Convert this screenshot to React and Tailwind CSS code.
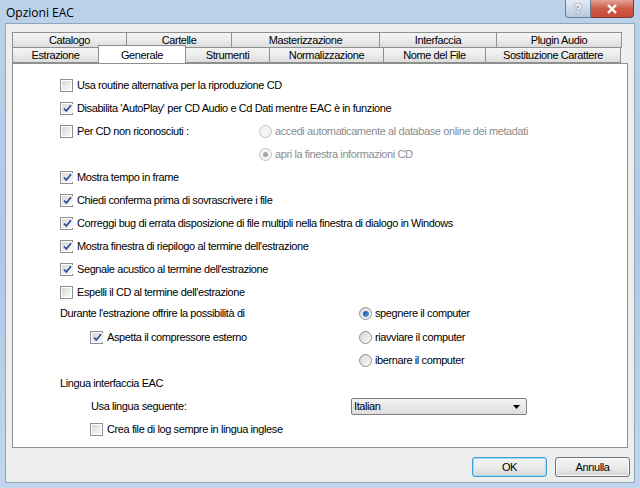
import React from 'react';

const font = { fontFamily: '"Liberation Sans", Arial, sans-serif' };

function CheckBox({ checked }) {
  return (
    <span className="w-[13px] h-[13px] shrink-0 border border-[#8e8f8f] bg-white p-px flex">
      <span className="flex-1 bg-gradient-to-br from-[#d8d8d8] to-[#fbfbfb] flex items-center justify-center">
        {checked && (
          <svg width="11" height="11" viewBox="0 0 11 11">
            <path d="M2 5.5 L4.3 8 L9 2.3" fill="none" stroke="#2b4a94" strokeWidth="1.7" />
          </svg>
        )}
      </span>
    </span>
  );
}

function Radio({ checked, disabled }) {
  return (
    <span
      className={`w-[13px] h-[13px] shrink-0 rounded-full border flex items-center justify-center ${
        disabled ? 'border-[#c2c2c2] bg-[#f4f4f4]' : 'border-[#8e8f8f] bg-gradient-to-br from-[#d6d6d6] to-[#fcfcfc]'
      }`}
    >
      {checked && (
        <span
          className={`rounded-full ${
            disabled ? 'bg-[#a6a6a6] w-[5px] h-[5px]' : 'bg-gradient-to-br from-[#124a8f] to-[#5aa7e6] w-[6px] h-[6px]'
          }`}
        />
      )}
    </span>
  );
}

function Check({ checked, label }) {
  return (
    <div className="flex items-center gap-[4px]">
      <CheckBox checked={checked} />
      <span>{label}</span>
    </div>
  );
}

function RadioItem({ checked, disabled, label }) {
  return (
    <div className={`flex items-center gap-[3px] ${disabled ? 'text-[#8d8d8d]' : ''}`}>
      <Radio checked={checked} disabled={disabled} />
      <span>{label}</span>
    </div>
  );
}

const row1 = [
  ['Catalogo', 115],
  ['Cartelle', 106],
  ['Masterizzazione', 149],
  ['Interfaccia', 118],
  ['Plugin Audio', 126],
];

const row2 = [
  ['Estrazione', 87],
  ['Generale', 88],
  ['Strumenti', 85],
  ['Normalizzazione', 115],
  ['Nome del File', 103],
  ['Sostituzione Carattere', 136],
];

function Tab({ label, width, active }) {
  if (active) {
    return (
      <div
        style={{ width }}
        className="h-[18px] -mt-[2px] -mb-px -ml-px relative z-10 bg-white border border-b-0 border-[#8e8f8f] flex items-start justify-center pt-[1px]"
      >
        {label}
      </div>
    );
  }
  return (
    <div
      style={{ width }}
      className="h-[16px] border border-[#8e8f8f] -ml-px first:ml-0 bg-gradient-to-b from-[#f4f4f4] via-[#ececec] to-[#dcdcdc] flex items-center justify-center"
    >
      {label}
    </div>
  );
}

export default function App() {
  return (
    <div
      style={font}
      className="w-[640px] h-[488px] overflow-hidden text-[11px] tracking-[-0.4px] text-black bg-gradient-to-b from-[#bcd2ea] via-[#aec8e6] to-[#c3d6ec] flex flex-col"
    >
      {/* Title bar */}
      <div className="h-[23px] flex items-start justify-between pl-[6px] pr-[6px] tracking-normal">
        <span className="text-[12px] mt-[4px]" style={{ fontFamily: '"Open Sans", "Noto Sans", sans-serif' }}>
          Opzioni EAC
        </span>
        <div className="flex">
          <div className="w-[26px] h-[18px] rounded-bl-[4px] border border-t-0 border-[#6f7f93] bg-gradient-to-b from-[#e3ecf6] to-[#b7c9dd] flex items-center justify-center text-[#fff] font-bold text-[12px] [text-shadow:0_0_2px_#3a4a5e]">
            ?
          </div>
          <div className="w-[43px] h-[18px] rounded-br-[4px] border border-t-0 border-l-0 border-[#7a3a34] bg-gradient-to-b from-[#e3a293] via-[#cd5a48] to-[#c9493a] flex items-center justify-center">
            <svg width="12" height="10" viewBox="0 0 12 10">
              <path d="M2 1 L10 9 M10 1 L2 9" stroke="#fff" strokeWidth="2.4" />
            </svg>
          </div>
        </div>
      </div>

      {/* Client area */}
      <div className="mx-[5px] h-[460px] bg-[#eeeeee] border border-[#93a5bb] pl-[6px] pt-[8px] flex flex-col">
        <div className="w-[616px] flex flex-col">
          <div className="flex">
            {row1.map(([l, w]) => (
              <Tab key={l} label={l} width={w} />
            ))}
          </div>
          <div className="flex -mt-px">
            {row2.map(([l, w], i) => (
              <Tab key={l} label={l} width={w} active={i === 1} />
            ))}
          </div>

          {/* Panel */}
          <div className="h-[385px] bg-white border border-[#8e8f8f] pl-[47px] pt-[10px] flex flex-col [&>div]:h-[23px] [&>div]:flex [&>div]:items-center">
            <div><Check label="Usa routine alternativa per la riproduzione CD" /></div>
            <div><Check checked label="Disabilita 'AutoPlay' per CD Audio e Cd Dati mentre EAC è in funzione" /></div>
            <div>
              <div className="w-[199px]"><Check label="Per CD non riconosciuti :" /></div>
              <RadioItem disabled label="accedi automaticamente al database online dei metadati" />
            </div>
            <div>
              <div className="w-[199px]" />
              <RadioItem disabled checked label="apri la finestra informazioni CD" />
            </div>
            <div><Check checked label="Mostra tempo in frame" /></div>
            <div><Check checked label="Chiedi conferma prima di sovrascrivere i file" /></div>
            <div><Check checked label="Correggi bug di errata disposizione di file multipli nella finestra di dialogo in Windows" /></div>
            <div><Check checked label="Mostra finestra di riepilogo al termine dell'estrazione" /></div>
            <div><Check checked label="Segnale acustico al termine dell'estrazione" /></div>
            <div><Check label="Espelli il CD al termine dell'estrazione" /></div>
            <div className="-mt-[2px]">
              <div className="w-[299px]">Durante l'estrazione offrire la possibilità di</div>
              <RadioItem checked label="spegnere il computer" />
            </div>
            <div className="mt-px">
              <div className="w-[299px] pl-[30px]"><Check checked label="Aspetta il compressore esterno" /></div>
              <RadioItem label="riavviare il computer" />
            </div>
            <div>
              <div className="w-[299px]" />
              <RadioItem label="ibernare il computer" />
            </div>
            <div>Lingua interfaccia EAC</div>
            <div>
              <div className="w-[291px] pl-[31px]">Usa lingua seguente:</div>
              <div className="w-[176px] h-[17px] border border-[#7f7f7f] rounded-[2px] bg-gradient-to-b from-[#f2f2f2] to-[#dedede] flex items-center justify-between pl-[2px] pr-[6px]">
                <span>Italian</span>
                <svg width="7" height="4" viewBox="0 0 7 4">
                  <path d="M0 0 H7 L3.5 4 Z" fill="#000" />
                </svg>
              </div>
            </div>
            <div>
              <div className="pl-[30px]"><Check label="Crea file di log sempre in lingua inglese" /></div>
            </div>
          </div>
        </div>

        {/* Buttons */}
        <div className="w-[618px] flex justify-end gap-[8px] mt-[9px]">
          <button className="w-[75px] h-[20px] rounded-[3px] border border-[#3c9fd8] shadow-[inset_0_0_0_1px_#a6dcf6] bg-gradient-to-b from-[#f3f3f3] via-[#ebebeb] to-[#d5d5d5] text-[11px]">
            OK
          </button>
          <button className="w-[75px] h-[20px] rounded-[3px] border border-[#707070] shadow-[inset_0_0_0_1px_#fcfcfc] bg-gradient-to-b from-[#f3f3f3] via-[#ebebeb] to-[#d5d5d5] text-[11px]">
            Annulla
          </button>
        </div>
      </div>
    </div>
  );
}
